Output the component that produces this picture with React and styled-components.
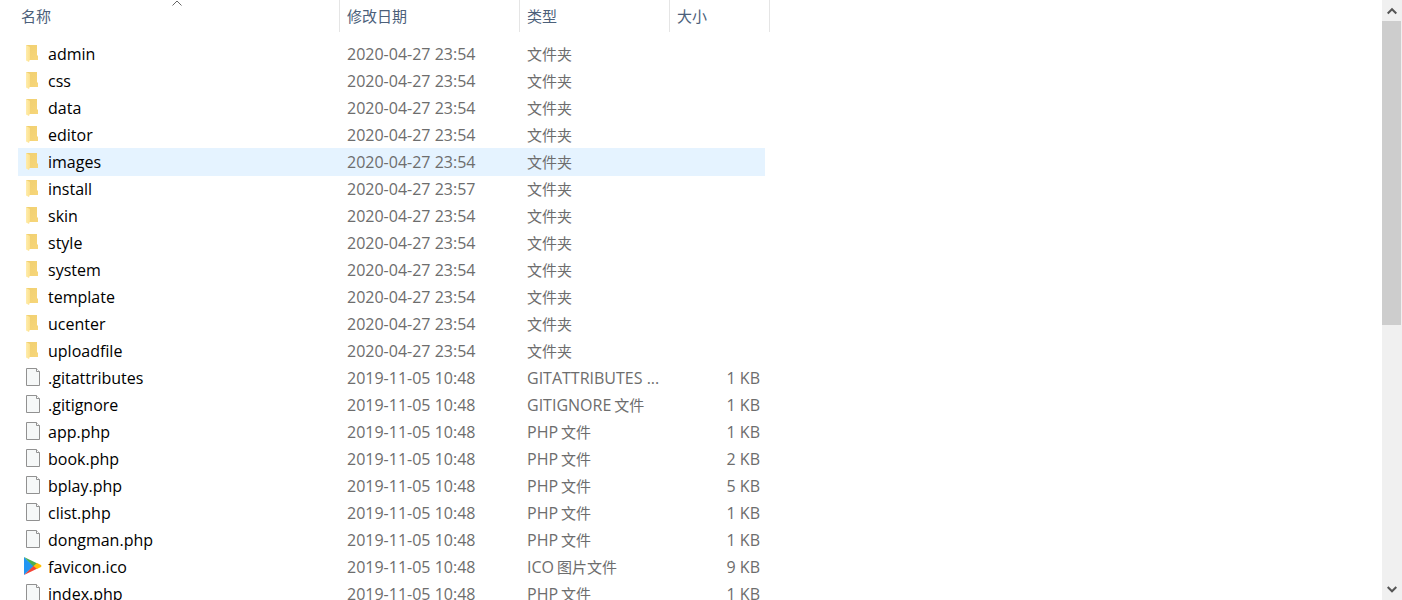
import React from "react";
import styled, { createGlobalStyle } from "styled-components";

const GlobalStyle = createGlobalStyle`
  * { box-sizing: border-box; }
  body {
    margin: 0;
    background: #fff;
    font-family: "Open Sans", "Noto Sans CJK SC", sans-serif;
    font-size: 16px;
  }
`;

const Explorer = styled.div`
  display: flex;
  height: 100vh;
  overflow: hidden;
`;

const Pane = styled.main`
  flex: 1;
  min-width: 0;
  overflow: hidden;
  padding-left: 18px;
`;

const FileTable = styled.table`
  table-layout: fixed;
  width: 752px;
  border-collapse: separate;
  border-spacing: 0;
`;

const Column = styled.col`
  width: ${(p) => p.$width}px;
`;

const HeaderCell = styled.th`
  height: 41px;
  padding: 0;
  vertical-align: top;
`;

const SortButton = styled.button`
  position: relative;
  display: block;
  width: 100%;
  height: 32px;
  padding: 0 0 0 ${(p) => (p.$first ? 3 : 7)}px;
  border: 0;
  border-right: 1px solid #e5e5e5;
  background: transparent;
  color: #4c607a;
  font: 15px/32px "Noto Sans CJK SC", sans-serif;
  text-align: left;
`;

const SortMark = styled.svg`
  position: absolute;
  top: 0;
  left: 50%;
  width: 10px;
  height: 7px;
  margin-left: -7px;
`;

const Row = styled.tr`
  height: 27px;
  line-height: 27px;
  --fill: ${(p) => (p.$hovered ? "#e5f3ff" : "transparent")};
`;

const Cell = styled.td`
  height: 27px;
  padding: 0 0 0 7px;
  background: var(--fill);
  box-shadow: 0 -1px var(--fill);
  color: #6d6d6d;
  white-space: nowrap;
`;

const NameCell = styled(Cell)`
  padding-left: 5px;
  color: #000;
`;

const SizeCell = styled(Cell)`
  padding: 0 5px 0 0;
  text-align: right;
`;

const FileName = styled.span`
  display: flex;
  align-items: center;
  height: 27px;
`;

const IconBox = styled.span`
  width: 25px;
  height: 27px;
  padding-top: 3px;

  svg {
    display: block;
  }
`;

const TypeText = styled.span`
  display: flex;
  gap: 3px;
  height: 27px;
`;

const Chinese = styled.span`
  font-family: "Noto Sans CJK SC", sans-serif;
  font-size: 15px;
  line-height: 25px;
`;

const ScrollBar = styled.aside`
  display: flex;
  flex-direction: column;
  width: 20px;
  background: #f0f0f0;
`;

const ScrollButton = styled.button`
  display: flex;
  align-items: center;
  justify-content: center;
  height: 21px;
  padding: 0;
  border: 0;
  background: transparent;
`;

const ScrollTrack = styled.div`
  flex: 1;
  padding-right: 1px;
`;

const ScrollThumb = styled.div`
  height: ${(p) => p.$share}%;
  background: #cdcdcd;
`;

const FolderIcon = () => (
  <svg width="18" height="18" viewBox="0 0 18 18" aria-hidden="true">
    <defs>
      <linearGradient id="folderBack" x1="0" y1="0" x2="1" y2="1">
        <stop offset="0" stopColor="#f0cf70" />
        <stop offset="1" stopColor="#f7d67a" />
      </linearGradient>
      <linearGradient id="folderFront" x1="0" y1="0" x2="1" y2="0">
        <stop offset="0" stopColor="#ffedad" />
        <stop offset="1" stopColor="#fce08c" />
      </linearGradient>
    </defs>
    <path d="M3 1H14V11L15 12V16H5Z" fill="url(#folderBack)" />
    <path d="M3 1L7 3V15L6 18L3 16.500Z" fill="url(#folderFront)" />
  </svg>
);

const FileIcon = () => (
  <svg width="18" height="18" viewBox="0 0 18 18" aria-hidden="true">
    <path d="M3.500 .5H13.500L16.500 3.500V17.500H3.500Z" fill="#f6f8f8" stroke="#919191" />
    <path d="M13.500 .5V3.500H16.500" fill="#fff" stroke="#919191" />
  </svg>
);

const PlayIcon = () => (
  <svg width="19" height="18" viewBox="0 0 19 18" aria-hidden="true">
    <path d="M1 0L11 9L1 18Z" fill="#2196f3" />
    <path d="M1 0L14.500 6.500L11 10Z" fill="#4caf50" />
    <path d="M1 18L14.500 11.500L11 8.500Z" fill="#f44336" />
    <path d="M14 6L18 8Q19 9 18 10L14 12L10.500 9Z" fill="#ffc107" />
  </svg>
);

const icons = { folder: FolderIcon, file: FileIcon, play: PlayIcon };

const folderNames = [
  "admin", "css", "data", "editor", "images", "install",
  "skin", "style", "system", "template", "ucenter", "uploadfile",
];

const file = (name, size, latin = "PHP", chinese = "文件", icon = "file") => ({
  name, size, latin, chinese, icon, date: "2019-11-05 10:48",
});

const entries = [
  ...folderNames.map((name) => ({
    name,
    icon: "folder",
    date: name === "install" ? "2020-04-27 23:57" : "2020-04-27 23:54",
    chinese: "文件夹",
  })),
  file(".gitattributes", "1 KB", "GITATTRIBUTES ...", ""),
  file(".gitignore", "1 KB", "GITIGNORE"),
  file("app.php", "1 KB"),
  file("book.php", "2 KB"),
  file("bplay.php", "5 KB"),
  file("clist.php", "1 KB"),
  file("dongman.php", "1 KB"),
  file("favicon.ico", "9 KB", "ICO", "图片文件", "play"),
  file("index.php", "1 KB"),
];

const headers = [
  { label: "名称", span: 1 },
  { label: "修改日期", span: 1 },
  { label: "类型", span: 1 },
  { label: "大小", span: 2 },
];

// The last column is the margin between the row's fill and the header's edge.
const columnWidths = [322, 180, 150, 95, 5];

const Chevron = ({ down }) => (
  <svg width="10" height="8" viewBox="0 0 10 8" aria-hidden="true">
    <path d={down ? "M.7 1L5 5.300L9.300 1" : "M.7 6.500L5 2.200L9.300 6.500"} fill="none" stroke="#555" strokeWidth="2" />
  </svg>
);

function FileRow({ entry, hovered }) {
  const Icon = icons[entry.icon];
  return (
    <Row $hovered={hovered}>
      <NameCell>
        <FileName>
          <IconBox><Icon /></IconBox>
          {entry.name}
        </FileName>
      </NameCell>
      <Cell>{entry.date}</Cell>
      <Cell>
        <TypeText>
          {entry.latin && <span>{entry.latin}</span>}
          {entry.chinese && <Chinese>{entry.chinese}</Chinese>}
        </TypeText>
      </Cell>
      <SizeCell>{entry.size}</SizeCell>
    </Row>
  );
}

export default function App() {
  return (
    <Explorer lang="zh-CN">
      <GlobalStyle />
      <Pane>
        <FileTable>
          <colgroup>
            {columnWidths.map((width) => <Column key={width} $width={width} />)}
          </colgroup>
          <thead>
            <tr>
              {headers.map((h, i) => (
                <HeaderCell key={h.label} scope="col" colSpan={h.span}>
                  <SortButton type="button" $first={i === 0}>
                    {h.label}
                    {i === 0 && (
                      <SortMark viewBox="0 0 10 7" aria-hidden="true">
                        <path d="M.5 5.500L5 1L9.500 5.500" fill="none" stroke="#666" />
                      </SortMark>
                    )}
                  </SortButton>
                </HeaderCell>
              ))}
            </tr>
          </thead>
          <tbody>
            {entries.map((e) => (
              <FileRow key={e.name} entry={e} hovered={e.name === "images"} />
            ))}
          </tbody>
        </FileTable>
      </Pane>
      <ScrollBar>
        <ScrollButton type="button" aria-label="向上滚动"><Chevron /></ScrollButton>
        <ScrollTrack><ScrollThumb $share={54.5} /></ScrollTrack>
        <ScrollButton type="button" aria-label="向下滚动"><Chevron down /></ScrollButton>
      </ScrollBar>
    </Explorer>
  );
}
